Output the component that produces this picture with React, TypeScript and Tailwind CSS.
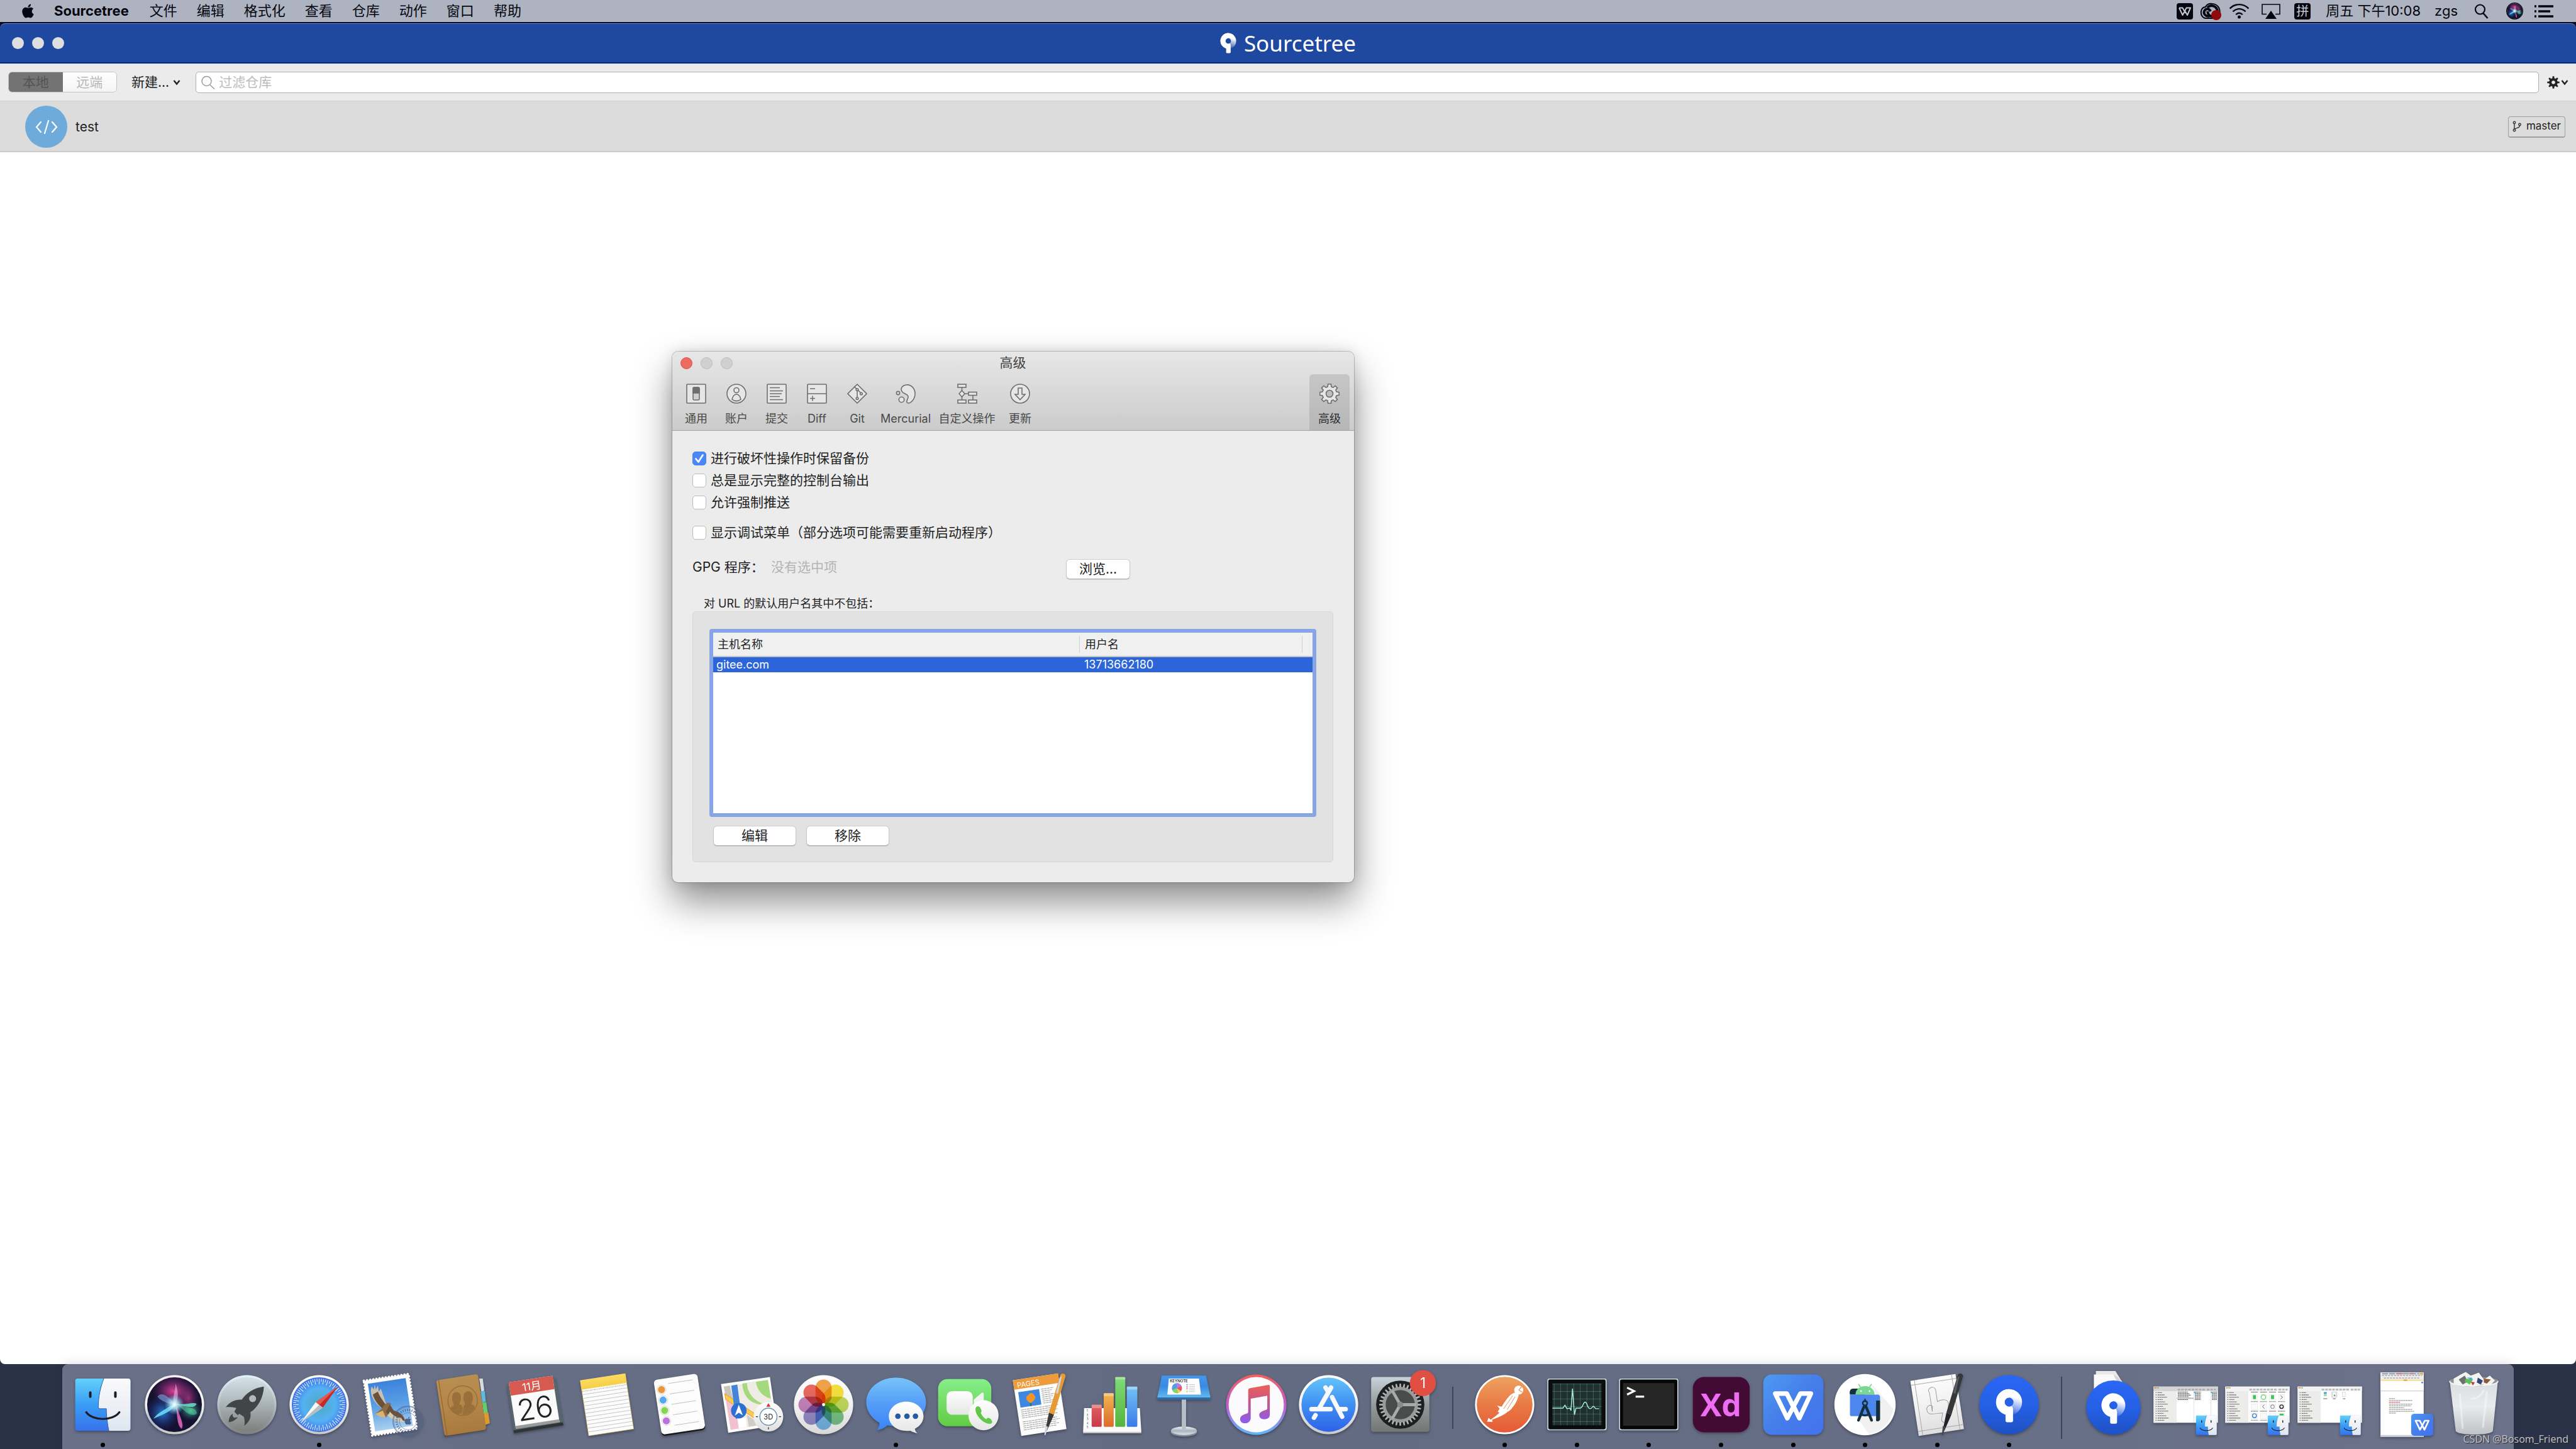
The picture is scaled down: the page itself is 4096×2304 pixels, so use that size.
import type { ReactNode } from 'react'
import { FaApple } from 'react-icons/fa'

const menus = ['文件', '编辑', '格式化', '查看', '仓库', '动作', '窗口', '帮助']

// Outline of a cog wheel, used by the toolbar, the preferences tab and the dock.
const gearPath = (cx: number, cy: number, outer: number, inner: number, teeth: number, w = 0.25) => {
  const pts: string[] = []
  for (let i = 0; i < teeth; i++) {
    const a = (i * 2 * Math.PI) / teeth - Math.PI / 2
    const step = (2 * Math.PI) / teeth
    const corners: [number, number][] = [
      [-w * 1.15, inner],
      [-w * 0.7, outer],
      [w * 0.7, outer],
      [w * 1.15, inner],
    ]
    corners.forEach(([k, r]) => {
      pts.push(`${(cx + r * Math.cos(a + k * step)).toFixed(2)} ${(cy + r * Math.sin(a + k * step)).toFixed(2)}`)
    })
  }
  return `M${pts.join('L')}Z`
}

const range = (n: number) => Array.from({ length: n }, (_, i) => i)

function Gradients() {
  const linear: [string, string[]][] = [
    ['finderBlue', ['#62d0fb', '#3a9df5', '#3872ec']],
    ['finderWhite', ['#fafafc', '#eef0f6', '#dde6f0']],
    ['ring', ['#ffffff', '#f1f1f1', '#c9c9c9']],
    ['launch', ['#d3e2e8', '#a9b3b6', '#7d7e7c']],
    ['launchRing', ['#e4f3fa', '#b7bfc3', '#7c7f82']],
    ['sky', ['#3c82dc', '#5b9fe6', '#a9d0ee']],
    ['leather', ['#b98e51', '#b48648', '#a97a3f']],
    ['yellow', ['#fbdb62', '#f5cf48']],
    ['photos', ['#ffffff', '#f2f2f2', '#d8d8d8']],
    ['message', ['#76c4f8', '#559df8', '#3b83f7']],
    ['green', ['#86ef8b', '#74dd66', '#62cb45']],
    ['paper', ['#ffffff', '#e4e6e4']],
    ['barRed', ['#e0605f', '#c93a49']],
    ['barOrange', ['#f2b74f', '#df6a2c']],
    ['barGreen', ['#7fdc78', '#55b43c']],
    ['barBlue', ['#74c3f7', '#3a7be8']],
    ['keynote', ['#4396ef', '#3a8ae2', '#63b9ee']],
    ['steel', ['#f2f5f8', '#a8b1bb', '#e1e5ea']],
    ['music', ['#ec5f56', '#c0568f', '#8a5cf5']],
    ['musicRing', ['#f0615b', '#c55bd0', '#5fb8fa']],
    ['store', ['#62c4f9', '#3f8ff2', '#2e61e8']],
    ['prefs', ['#c7d3da', '#959a9d', '#747674']],
    ['postman', ['#eea25f', '#e87a44', '#e75a37']],
    ['wps', ['#4d9bf3', '#457de9', '#4472ee']],
    ['sourcetree', ['#2b66f6', '#2560e6', '#1f51c4']],
    ['sheet', ['#fcfcfc', '#f1f1f1', '#dedede']],
    ['trash', ['#d9dce0', '#e9eaec', '#bfc2c6']],
  ]
  return (
    <svg className="absolute h-0 w-0" aria-hidden="true">
      <defs>
        {linear.map(([id, stops]) => (
          <linearGradient key={id} id={id} x1="0" y1="0" x2={id === 'wps' ? '1' : '0'} y2="1">
            {stops.map((c, i) => (
              <stop key={i} offset={i / (stops.length - 1)} stopColor={c} />
            ))}
          </linearGradient>
        ))}
        <linearGradient id="logoFade" gradientUnits="userSpaceOnUse" x1="92" y1="60" x2="82" y2="94">
          <stop offset="0" stopColor="#fff" />
          <stop offset="1" stopColor="#fff" stopOpacity="0.05" />
        </linearGradient>
        <radialGradient id="safari">
          <stop offset="0" stopColor="#4fa8c0" />
          <stop offset="0.6" stopColor="#55b2f2" />
          <stop offset="1" stopColor="#3a6fe8" />
        </radialGradient>
        <radialGradient id="siriPink">
          <stop offset="0" stopColor="#e3449a" stopOpacity="0.95" />
          <stop offset="1" stopColor="#8a2a80" stopOpacity="0" />
        </radialGradient>
        <radialGradient id="siriBlue">
          <stop offset="0" stopColor="#2b7fe0" stopOpacity="0.95" />
          <stop offset="1" stopColor="#1b2f80" stopOpacity="0" />
        </radialGradient>
        <radialGradient id="siriTeal">
          <stop offset="0" stopColor="#54d8b0" stopOpacity="0.8" />
          <stop offset="1" stopColor="#1c5c60" stopOpacity="0" />
        </radialGradient>
        <radialGradient id="siriCore">
          <stop offset="0" stopColor="#fff" />
          <stop offset="0.4" stopColor="#baf3ff" stopOpacity="0.8" />
          <stop offset="1" stopColor="#7fd0ff" stopOpacity="0" />
        </radialGradient>
        <pattern id="grid" width="13" height="15" patternUnits="userSpaceOnUse">
          <path d="M0 0H13M0 0V15" stroke="#5f8f84" strokeWidth="1.2" fill="none" />
        </pattern>
      </defs>
    </svg>
  )
}

/* ---------- shared drawings (144 x 144 canvas) ---------- */

function FinderArt() {
  return (
    <g>
      <rect x="17" y="20" width="110" height="104" rx="5" fill="url(#finderBlue)" />
      <path d="M74 20H122a5 5 0 0 1 5 5V119a5 5 0 0 1-5 5H84C81 110 79 92 79 80H66a3 3 0 0 1-3-3C63 55 68 35 74 20Z" fill="url(#finderWhite)" />
      <path d="M74 20C68 35 63 55 63 77a3 3 0 0 0 3 3H79C79 92 81 110 84 124" fill="none" stroke="#2b5c9a" strokeWidth="1.2" />
      <path d="M47 48V56M97 48V56" stroke="#1c1d24" strokeWidth="5" strokeLinecap="round" />
      <path d="M39 87C52 105 92 105 105 87" fill="none" stroke="#1c1d24" strokeWidth="4" strokeLinecap="round" />
    </g>
  )
}

function WpsArt() {
  return (
    <g>
      <rect x="12" y="12" width="120" height="120" rx="17" fill="url(#wps)" />
      <path d="M36 50H59L74 80M36 50L60 99L86 50H107L84 99L71 72" fill="none" stroke="#fff" strokeWidth="9" strokeLinejoin="round" strokeLinecap="round" />
    </g>
  )
}

function SourcetreeMark() {
  return (
    <g>
      <path fillRule="evenodd" d="M72 41A26 26 0 1 1 72 93A26 26 0 1 1 72 41ZM72 58A9 9 0 1 0 72 76A9 9 0 1 0 72 58Z" fill="url(#logoFade)" />
      <path d="M72 41A26 26 0 0 0 65 92V104a3 3 0 0 0 3 3H77a3 3 0 0 0 3-3V82C80 79 79 77 77 74.500A9 9 0 1 1 72 58Z" fill="#fff" />
    </g>
  )
}

function SiriArt() {
  return (
    <g>
      <circle cx="72" cy="72" r="59" fill="url(#ring)" />
      <circle cx="72" cy="72" r="54.5" fill="#15122f" />
      <ellipse cx="70" cy="45" rx="42" ry="32" fill="url(#siriPink)" />
      <ellipse cx="100" cy="60" rx="22" ry="32" fill="url(#siriPink)" opacity="0.6" />
      <ellipse cx="48" cy="88" rx="34" ry="36" fill="url(#siriBlue)" />
      <ellipse cx="104" cy="84" rx="24" ry="20" fill="url(#siriTeal)" />
      <path d="M72 70C58 52 44 46 38 56C44 64 58 70 72 72Z" fill="#7db7e8" opacity="0.55" />
      <path d="M72 70C60 78 40 86 30 100C48 92 66 86 74 72Z" fill="#6fe1f4" opacity="0.85" />
      <path d="M74 70C78 90 76 112 86 120C93 112 80 90 74 70Z" fill="#e668bd" opacity="0.85" />
      <path d="M74 70C92 74 108 66 116 70C112 82 92 74 74 72Z" fill="#6fe9cf" opacity="0.8" />
      <path d="M78 72C92 84 104 98 116 90C118 78 100 78 78 72Z" fill="#4fd79a" opacity="0.55" />
      <path d="M72 72C66 60 74 46 74 30C80 46 80 60 74 72Z" fill="#e9b8e6" opacity="0.6" />
      <circle cx="72" cy="72" r="20" fill="url(#siriCore)" />
    </g>
  )
}

function Tilted({ children }: { children: ReactNode }) {
  return <g transform="rotate(-8.7 72 72)">{children}</g>
}

function Pen({ dark }: { dark?: boolean }) {
  return (
    <g>
      <path d="M113 12C116 8 124 10 123 16L100 92L90 88Z" fill={dark ? '#35373b' : '#e79a33'} />
      <path d="M116 14L108 50L104 49L111 20Z" fill={dark ? '#5b6068' : '#cdd7e3'} />
      <path d="M100 92L90 88L83 122L86 124Z" fill={dark ? '#222327' : '#3c3a38'} />
      <path d="M88 116L83 133L81 132L83 114Z" fill={dark ? '#44474d' : '#c9d6e2'} />
    </g>
  )
}

function FinderWindow({ kind }: { kind: 'columns' | 'icons' | 'files' }) {
  return (
    <g>
      <rect x="8" y="36" width="128" height="72" fill="#fff" />
      <rect x="8" y="36" width="128" height="9" fill={kind === 'columns' ? '#d4d4d4' : '#f3f3f3'} />
      <rect x="8" y="45" width="46" height="63" fill="#ececeb" />
      <circle cx="11" cy="38.5" r="1.2" fill="#d9534a" />
      <circle cx="14" cy="38.5" r="1.2" fill="#c9a23c" />
      <circle cx="17" cy="38.5" r="1.2" fill="#4ca84a" />
      <path d="M56 42H110M114 42H132" stroke="#9a9a9a" strokeWidth="3" strokeDasharray="5 2" opacity="0.7" />
      {range(13).map((i) => (
        <path key={i} d={`M12 ${48 + i * 4.6}h2M16 ${48 + i * 4.6}h${9 + ((i * 5) % 14)}`} stroke="#777" strokeWidth="1.6" strokeDasharray="3 0.6" />
      ))}
      {kind === 'columns' &&
        range(6).map((i) => (
          <path key={i} d={`M56 ${47 + i * 3}h${20 + ((i * 3) % 7)}M90 ${47 + i * 3}h12M124 ${47 + i * 3}h10`} stroke="#555" strokeWidth="1.4" strokeDasharray="3 0.5" />
        ))}
      {kind === 'columns' && (
        <>
          <rect x="54" y="58" width="34" height="2.6" fill="#bdbdbd" />
          <path d="M88 45V108M122 45V108" stroke="#d8d8d8" />
          <rect x="88" y="46" width="3" height="3" fill="#45b2ef" />
          <rect x="122" y="46" width="3" height="3" fill="#45b2ef" />
        </>
      )}
      {kind === 'icons' && (
        <>
          {[66, 84, 102, 120].map((x, i) =>
            [57, 76, 94].map((y, j) => (
              <g key={`${i}${j}`}>
                <rect x={x - 6} y={y - 5} width="12" height="11" fill="#fafafa" stroke="#ddd" strokeWidth="0.6" />
                <path d={`M${x - 7} ${y + 9}h14`} stroke="#777" strokeWidth="1.3" strokeDasharray="2.5 0.5" />
              </g>
            ))
          )}
          <path d="M59 47h14M77 47h14M95 47h14M113 47h14" stroke="#777" strokeWidth="1.3" />
          <rect x="63" y="53" width="6" height="8" fill="#3fc35b" />
          <circle cx="84" cy="57" r="4.5" fill="none" stroke="#5ddc5a" strokeWidth="1.5" />
          <rect x="99" y="53" width="6" height="8" fill="#3fc35b" />
          <path d="M118 54l4 3l-4 4M86 72l-4 4l4 4" fill="none" stroke="#444" />
          <circle cx="102" cy="76" r="3.5" fill="none" stroke="#999" strokeWidth="1.5" />
          <circle cx="120" cy="76" r="3.5" fill="none" stroke="#222" strokeWidth="1.8" />
          <circle cx="66" cy="94" r="4" fill="none" stroke="#3b8bdc" strokeWidth="1.8" />
          <rect x="116" y="90" width="8" height="4" fill="#35c650" />
        </>
      )}
      {kind === 'files' && (
        <>
          <rect x="60" y="47" width="6" height="3" fill="#3f9be0" />
          <rect x="60" y="50" width="6" height="5" fill="#a9d7b4" />
          <rect x="75" y="46" width="12" height="12" fill="#dcdcdc" />
          <rect x="78" y="48" width="6" height="8" fill="#fff" />
          <rect x="80" y="52" width="3" height="3" fill="#45b86a" />
          <rect x="97" y="47" width="6" height="9" fill="#f8f8f8" stroke="#ccc" strokeWidth="0.7" />
          <path d="M59 60h8M78 60h6M98 60h5" stroke="#666" strokeWidth="1.3" />
        </>
      )}
      <g transform="translate(86 86) scale(0.375)">
        <FinderArt />
      </g>
    </g>
  )
}

/* ---------- dock ---------- */

type DockApp = { name: string; running?: boolean; art: ReactNode }

const apps: DockApp[] = [
  { name: 'Finder', running: true, art: <FinderArt /> },
  { name: 'Siri', art: <SiriArt /> },
  {
    name: 'Launchpad',
    art: (
      <g>
        <circle cx="72" cy="72" r="59" fill="url(#launchRing)" />
        <circle cx="72" cy="72" r="54.5" fill="url(#launch)" />
        <path d="M106 36C88 38 71 48 62 62C50 61 38 66 30 77C38 76 46 77 51 79L47 86L54 93L57 90L66 96C68 102 68 108 67 114C77 106 81 98 79 87C94 78 105 58 106 36Z" fill="#414548" />
        <circle cx="83.500" cy="60" r="7" fill="#aebabf" />
        <path d="M44 90C37 94 36 101 36 107C44 106 50 102 54 97L48 98C44 97 43 94 44 90Z" fill="#414548" />
      </g>
    ),
  },
  {
    name: 'Safari',
    running: true,
    art: (
      <g>
        <circle cx="72" cy="72" r="59" fill="url(#ring)" />
        <circle cx="72" cy="72" r="54.5" fill="url(#safari)" />
        {range(72).map((i) => (
          <path key={i} d={i % 2 ? 'M72 20V26' : 'M72 20V31'} stroke="#eef6ff" strokeWidth="1.5" opacity="0.85" transform={`rotate(${i * 5} 72 72)`} />
        ))}
        <path d="M110 35L79 78L65 67Z" fill="#e4564f" />
        <path d="M110 35L79 78L72 72.500Z" fill="#bf2a2a" />
        <path d="M35 108L65 67L79 78Z" fill="#f6f6f6" />
        <path d="M35 108L72 72.500L79 78Z" fill="#b9bdc2" />
      </g>
    ),
  },
  {
    name: 'Mail',
    art: (
      <g>
        <Tilted>
          <rect x="26" y="17" width="90" height="110" fill="#fff" />
          <rect x="26" y="17" width="90" height="110" fill="none" stroke="#fff" strokeWidth="5" strokeDasharray="0.1 6.2" strokeLinecap="round" />
          <rect x="33" y="24" width="76" height="96" fill="url(#sky)" />
        </Tilted>
        <path d="M34 36C30 44 33 56 40 66C46 74 52 78 58 82L66 78C60 64 56 50 52 40L48 46L46 34L42 42L40 32L38 42Z" fill="#c9bfae" />
        <path d="M36 52C40 66 50 76 58 82L66 76C58 68 50 56 46 46Z" fill="#6b5139" />
        <path d="M41 90L54 80C60 68 68 66 72 70C72 76 70 86 62 98L52 94Z" fill="#8d6b45" />
        <path d="M41 90L56 84L62 98L50 96Z" fill="#d9b376" />
        <path d="M62 86C72 98 84 104 100 104C98 92 88 86 78 84L70 72Z" fill="#6b5139" />
        <path d="M66 94C74 102 86 108 98 106L92 98C82 98 76 92 70 86Z" fill="#d7c9b0" />
        <g fill="none" stroke="#4f628c" opacity="0.75">
          <circle cx="106" cy="105" r="30" strokeWidth="1.5" />
          <circle cx="106" cy="105" r="28" strokeWidth="0.8" />
          <circle cx="106" cy="105" r="17" strokeWidth="1" />
          <circle cx="106" cy="105" r="22.500" strokeWidth="5" strokeDasharray="2 2.500" />
        </g>
        <FaApple x="97" y="95" size="18" color="#4f628c" />
      </g>
    ),
  },
  {
    name: 'Contacts',
    art: (
      <g>
        <path d="M104 20L111 20L114 44L108 46Z" fill="#d9dbdd" />
        <path d="M107 45L115 45L117 66L110 68Z" fill="#5fb9e0" />
        <path d="M110 68L118 67L121 88L113 90Z" fill="#63cf6a" />
        <path d="M113 89L122 88L125 109L116 112Z" fill="#e09a2c" />
        <path d="M35 135L117 122L118 116L34 128Z" fill="#5c3f1e" />
        <Tilted>
          <rect x="26" y="16" width="84" height="112" rx="5" fill="url(#leather)" />
          <path d="M31 16V128" stroke="#8f6733" strokeWidth="1.500" />
        </Tilted>
        <circle cx="71" cy="64" r="29.500" fill="none" stroke="#99703a" strokeWidth="1.800" />
        <path d="M50 84C44 80 46 78 54 73C48 62 48 46 60 47C68 48 70 60 64 71C72 74 72 80 70 88C62 94 54 90 50 84Z" fill="#99703a" />
        <path d="M92 82C98 78 96 74 88 71C94 60 92 46 82 45C72 46 70 60 76 71C70 76 74 80 70 92C80 92 88 88 92 82Z" fill="#99703a" />
      </g>
    ),
  },
  {
    name: 'Calendar',
    art: (
      <g>
        <path d="M15 33L112 19L128 113L29 129Z" fill="#58656d" />
        <path d="M29 129L128 113L126 107L28 123Z" fill="#2f3436" />
        <Tilted>
          <rect x="26" y="20" width="88" height="93" fill="#fbfbfb" />
          <rect x="26" y="20" width="88" height="27" fill="#d75a50" />
          <path d="M26 108H114V114H26Z" fill="#9a9a9a" />
          <text x="70" y="42" fontSize="21" textAnchor="middle" fill="#fff">11月</text>
          <text x="70" y="100" fontSize="59" fontWeight="300" textAnchor="middle" fill="#222">26</text>
        </Tilted>
      </g>
    ),
  },
  {
    name: 'Notes',
    art: (
      <Tilted>
        <rect x="26" y="17" width="91" height="111" fill="#fcfcfb" stroke="#a98f3a" strokeWidth="0.800" />
        <rect x="26" y="16" width="91" height="19" fill="url(#yellow)" />
        <path d="M27 38.500H117" stroke="#777" strokeWidth="1.200" strokeDasharray="1.200 1.800" />
        {range(11).map((i) => (
          <path key={i} d={`M27 ${45 + i * 7.5}H117`} stroke="#b9bac4" strokeWidth="1" />
        ))}
      </Tilted>
    ),
  },
  {
    name: 'Reminders',
    art: (
      <Tilted>
        <rect x="28" y="19" width="88" height="110" rx="7" fill="#17181a" />
        <rect x="28" y="16" width="88" height="110" rx="7" fill="#fcfcfc" />
        {['#ef9436', '#4fa9f3', '#84d64f', '#b971dc'].map((c, i) => (
          <g key={c}>
            <circle cx="41" cy={37 + i * 21} r="9" fill="none" stroke="#cfcfcf" />
            <circle cx="41" cy={37 + i * 21} r="7" fill={c} />
          </g>
        ))}
        {range(5).map((i) => (
          <path key={i} d={`M56 ${27 + i * 21}H105`} stroke="#b5b5b5" strokeWidth="1" />
        ))}
      </Tilted>
    ),
  },
  {
    name: 'Maps',
    art: (
      <g>
        <path d="M10.500 31L108 17L122 113L25 128Z" fill="#fdfdfb" />
        <path d="M16 36L104 23L117 108L30 122Z" fill="#efece4" />
        <path d="M53 30L104 23L111 66L92 72C66 70 54 52 53 30Z" fill="#a5d97e" />
        <path d="M62 29L80 26C82 44 94 56 110 60L111 74C82 70 64 54 62 29Z" fill="#efece4" />
        <path d="M16 36L28 34L34 60L19 50Z" fill="#c9c5bc" />
        <path d="M18 50L78 90L106 108L92 110L70 94L20 62Z" fill="#f6cf52" stroke="#ef9d3c" strokeWidth="1.500" />
        <path d="M20 62L42 78L48 119L30 122Z" fill="#f2c1cf" />
        <path d="M31 34L43 32L52 100L40 100Z" fill="#4386d8" />
        <path d="M43 98H60L62 116L46 119Z" fill="#fff" />
        <path d="M62 92L90 112L66 116Z" fill="#cfccc4" />
        <circle cx="46" cy="84" r="15.500" fill="#2e6fd3" />
        <path d="M46 72L54 93L46 88L38 94Z" fill="#fff" />
        <circle cx="105" cy="96" r="29.500" fill="url(#sheet)" />
        <circle cx="105" cy="96" r="17" fill="#fff" stroke="#6a94ad" strokeWidth="1.800" />
        <path d="M105 69L109 76H101Z" fill="#dd2f25" />
        <path d="M80 96h4M126 96h4M105 117v4" stroke="#222" strokeWidth="1.500" />
        <text x="105" y="101" fontSize="14" textAnchor="middle" fill="#222">3D</text>
      </g>
    ),
  },
  {
    name: 'Photos',
    art: (
      <g>
        <circle cx="72" cy="72" r="59" fill="url(#photos)" />
        {['#f29a36', '#f8e02a', '#bcd94a', '#6cc080', '#6db3e8', '#8e82c8', '#c077b4', '#ea5a50'].map((c, i) => (
          <rect key={c} x="56" y="22" width="32" height="49" rx="16" fill={c} opacity="0.9" className="mix-blend-multiply" transform={`rotate(${i * 45} 72 72)`} />
        ))}
        <circle cx="72" cy="72" r="3" fill="#fff" />
      </g>
    ),
  },
  {
    name: 'Messages',
    running: true,
    art: (
      <g>
        <path d="M72 18C105 18 132 40 132 67C132 95 105 115 72 115C66 115 60 114 55 113C48 119 42 122 34 123C38 118 40 112 39 108C23 99 13 84 13 67C13 40 39 18 72 18Z" fill="url(#message)" />
        <path d="M93 66C112 66 127 79 127 95C127 106 120 115 110 120C110 123 112 127 115 129C109 128 104 126 101 124C76 127 58 113 58 95C58 79 73 66 93 66Z" fill="url(#paper)" />
        <g fill="#2b599f">
          <circle cx="76" cy="95" r="5.500" />
          <circle cx="94" cy="95" r="5.500" />
          <circle cx="111" cy="95" r="5.500" />
        </g>
      </g>
    ),
  },
  {
    name: 'FaceTime',
    art: (
      <g>
        <rect x="12" y="21" width="106" height="94" rx="19" fill="url(#green)" />
        <rect x="29" y="45" width="52" height="47" rx="11" fill="url(#paper)" />
        <path d="M83 62L98 49C101 47 103 48 103 51V85C103 88 101 90 98 87L83 75Z" fill="#f2f4f2" />
        <circle cx="102.500" cy="93" r="30" fill="url(#paper)" />
        <path d="M87 78C83 90 102 112 117 110C121 108 120 104 117 101C113 97 110 98 108 101C104 100 98 92 97 88C99 86 99 84 97 80C94 74 90 74 87 78Z" fill="#62c84c" />
      </g>
    ),
  },
  {
    name: 'Pages',
    art: (
      <g>
        <Tilted>
          <rect x="26" y="16" width="91" height="112" fill="#fdfdfd" />
          <rect x="26" y="16" width="91" height="19" fill="#ee9b3c" />
          <text x="33" y="32" fontSize="14" fill="#fff">PAGES</text>
          <rect x="33" y="41" width="42" height="31" fill="#3c87df" />
          <path d="M54 66C44 60 46 50 52 50C56 44 62 46 64 52C68 56 62 64 54 66Z" fill="#f0952c" />
          <path d="M54 66V72" stroke="#2f6a34" strokeWidth="2" />
          {range(8).map((i) => (
            <path key={i} d={`M79 ${42 + i * 4}H${104 - (i % 3) * 4}`} stroke="#9a9a9a" strokeWidth="1.300" strokeDasharray="5 1" />
          ))}
          {range(11).map((i) => (i === 5 ? null : <path key={i} d={`M33 ${77 + i * 4}H${108 - ((i * 7) % 12)}`} stroke="#9a9a9a" strokeWidth="1.300" strokeDasharray="6 1 4 1" />))}
        </Tilted>
        <Pen />
      </g>
    ),
  },
  {
    name: 'Numbers',
    art: (
      <g>
        <path d="M16 79H127L130 127H14Z" fill="#fafafa" />
        <path d="M14 126H130V129H14Z" fill="#c3c3c3" />
        {range(5).map((i) => (
          <text key={i} x="21" y={87 + i * 8} fontSize="6" fill="#555">{i + 1}</text>
        ))}
        <rect x="31" y="72" width="20" height="44" rx="2" fill="url(#barRed)" />
        <rect x="55" y="49" width="20" height="67" rx="2" fill="url(#barOrange)" />
        <rect x="78" y="17" width="20" height="99" rx="2" fill="url(#barGreen)" />
        <rect x="101" y="36" width="21" height="80" rx="2" fill="url(#barBlue)" />
        <g fill="#fff" opacity="0.3">
          <rect x="31" y="72" width="20" height="7" />
          <rect x="55" y="49" width="20" height="6" />
          <rect x="78" y="17" width="20" height="5" />
          <rect x="101" y="36" width="21" height="6" />
        </g>
      </g>
    ),
  },
  {
    name: 'Keynote',
    art: (
      <g>
        <rect x="68" y="60" width="8" height="62" fill="url(#steel)" />
        <ellipse cx="72" cy="127" rx="26" ry="8.500" fill="#7e8d9b" />
        <ellipse cx="72" cy="124" rx="26" ry="8.500" fill="url(#steel)" />
        <path d="M68 60H76V124H68Z" fill="#b6bec7" />
        <path d="M28 14H116L125 58H19Z" fill="url(#keynote)" />
        <path d="M19 58H125V62H19Z" fill="#2c6ca8" />
        <path d="M42 20H102L106 52H39Z" fill="#fdfdfd" />
        <text x="44" y="27" fontSize="7.500" fontWeight="600" fill="#333">KEYNOTE</text>
        <circle cx="58" cy="39" r="10" fill="#4f9fe6" />
        <path d="M58 39V29A10 10 0 0 1 67 35Z" fill="#c277e0" />
        <path d="M58 39L67 35A10 10 0 0 1 66 45Z" fill="#e55" />
        <path d="M58 39L66 45A10 10 0 0 1 60 49Z" fill="#f3d04b" />
        <path d="M58 39L60 49A10 10 0 0 1 49 43Z" fill="#8bd560" />
        {['#4f9fe6', '#c277e0', '#e55', '#f3d04b', '#8bd560'].map((c, i) => (
          <g key={c}>
            <rect x="77" y={31 + i * 3.5} width="2.500" height="2" fill={c} />
            <path d={`M82 ${32 + i * 3.5}h12`} stroke="#bbb" strokeWidth="1" />
          </g>
        ))}
      </g>
    ),
  },
  {
    name: 'iTunes',
    art: (
      <g>
        <circle cx="72" cy="72" r="60" fill="url(#musicRing)" />
        <circle cx="72" cy="72" r="55" fill="#fbfafc" />
        <path d="M56 44C56 41 57 40 60 39L95 33C98 32 99 33 99 36V92C99 98 94 101 88 101C82 101 78 98 78 93C78 88 82 86 87 84C93 82 94 82 94 78V54L61 60V98C61 105 56 109 50 109C44 109 40 106 40 101C40 95 44 93 49 91C55 89 56 89 56 85Z" fill="url(#music)" />
      </g>
    ),
  },
  {
    name: 'App Store',
    art: (
      <g>
        <circle cx="72" cy="72" r="59" fill="url(#ring)" />
        <circle cx="72" cy="72" r="54" fill="url(#store)" />
        <g stroke="#f7f9fb" strokeWidth="9" strokeLinecap="round" fill="none">
          <path d="M77 38L53 80M38 81H76M94 81H106M66 38L71 46M79 57L99 96M46 93L43 98" />
        </g>
      </g>
    ),
  },
  {
    name: 'System Preferences',
    art: (
      <g>
        <rect x="14" y="17" width="116" height="109" rx="5" fill="url(#prefs)" />
        <circle cx="72" cy="72" r="48" fill="#1e1f20" />
        <path d={gearPath(72, 72, 42, 35, 32)} fill="#b1b2b2" />
        <circle cx="72" cy="72" r="30" fill="#4a4b4b" />
        <circle cx="72" cy="72" r="32" fill="none" stroke="#9a9b9b" strokeWidth="6" />
        <path d="M72 72H104M72 72L56 44M72 72L56 100" stroke="#a9aaaa" strokeWidth="6" />
        <circle cx="72" cy="72" r="6" fill="#8b8c8c" />
        <circle cx="117" cy="29" r="26" fill="#e04f42" />
        <text x="117" y="39" fontSize="28" textAnchor="middle" fill="#fff">1</text>
      </g>
    ),
  },
]

const openApps: DockApp[] = [
  {
    name: 'Postman',
    running: true,
    art: (
      <g>
        <circle cx="72" cy="72" r="59" fill="#fff" />
        <circle cx="72" cy="72" r="55.500" fill="url(#postman)" />
        <circle cx="100" cy="43" r="9" fill="#fff" />
        <path d="M100 43L106 36M100 43L107 47" stroke="#e98c4f" strokeWidth="1.500" />
        <path d="M93 48C82 50 74 64 66 76L57 74L62 80L58 86C68 92 80 86 84 82C92 74 98 62 100 53Z" fill="#fff" />
        <path d="M88 54L70 80M93 56L77 82" stroke="#e98c4f" strokeWidth="1.200" />
        <path d="M66 84C58 92 50 98 44 102L37 104L48 106L47 102C58 98 72 92 78 86Z" fill="#fff" />
        <path d="M40 98L37 106L48 106Z" fill="#fff" />
      </g>
    ),
  },
  {
    name: 'Activity Monitor',
    running: true,
    art: (
      <g>
        <rect x="13" y="20" width="118" height="103" rx="4" fill="#c9dce4" />
        <rect x="15" y="22" width="114" height="99" rx="3" fill="#0b0c0c" />
        <rect x="23" y="30" width="98" height="83" fill="#1f302e" />
        <rect x="23" y="30" width="98" height="83" fill="url(#grid)" />
        <path d="M23 79H44L48 73L52 80L58 79L60 84L63 40L67 92L70 79H78C84 79 84 67 88 67C93 67 92 79 98 80C103 80 103 73 106 76L109 80H116" fill="none" stroke="#a9f0dc" strokeWidth="1.800" />
      </g>
    ),
  },
  {
    name: 'Terminal',
    running: true,
    art: (
      <g>
        <rect x="13" y="20" width="118" height="103" rx="4" fill="#c9dce4" />
        <rect x="15" y="22" width="114" height="99" rx="3" fill="#060606" />
        <rect x="21" y="29" width="102" height="85" fill="#262626" />
        <path d="M29 38L43 45L29 52" fill="none" stroke="#fff" strokeWidth="4" />
        <path d="M46 56H63" stroke="#fff" strokeWidth="4" />
      </g>
    ),
  },
  {
    name: 'Adobe XD',
    running: true,
    art: (
      <g>
        <rect x="16" y="17" width="113" height="110" rx="22" fill="#420a35" />
        <text x="72" y="95" fontSize="63" fontWeight="700" textAnchor="middle" fill="#ec6df2" className="font-['Open_Sans',sans-serif]">Xd</text>
      </g>
    ),
  },
  { name: 'WPS Office', running: true, art: <WpsArt /> },
  {
    name: 'Android Studio',
    running: true,
    art: (
      <g>
        <circle cx="72" cy="72" r="61" fill="#fff" />
        <path d="M84 30L128 80A60 60 0 0 1 80 131L58 100L98 60Z" fill="#f1f1f1" />
        <path d="M48 40H72V52H42C40 44 44 40 48 40Z" fill="#14303f" />
        <path d="M53 52C53 42 61 35 72 35C83 35 91 42 91 52Z" fill="#78d793" />
        <path d="M63 37L59 31M81 37L85 31" stroke="#78d793" strokeWidth="2" />
        <circle cx="64" cy="45" r="1.800" fill="#fff" />
        <circle cx="81" cy="45" r="1.800" fill="#fff" />
        <path d="M42 52H97C101 52 102 55 102 58V64H94V95H45C43 95 42 93 42 91Z" fill="#4c86ee" />
        <path d="M94 64H102V101C102 105 94 107 94 103Z" fill="#14303f" />
        <path d="M72 60V67" stroke="#14303f" strokeWidth="2.500" />
        <circle cx="72" cy="69" r="4.500" fill="none" stroke="#14303f" strokeWidth="3" />
        <path d="M70 76L59 103M74 76L85 103" stroke="#14303f" strokeWidth="5.500" strokeLinecap="round" />
        <path d="M64 91C69 94 75 94 80 91" fill="none" stroke="#14303f" strokeWidth="4" />
      </g>
    ),
  },
  {
    name: 'Script Editor',
    running: true,
    art: (
      <g>
        <Tilted>
          <rect x="26" y="17" width="91" height="111" fill="url(#sheet)" />
          <path d="M34 17V128M109 17V128M26 26H117M26 119H117" stroke="#9b9b9b" strokeWidth="1" />
          <path d="M60 46C54 36 72 32 73 42V66C82 62 96 64 94 74L88 104C86 112 74 110 76 102L80 90C66 88 52 92 50 82C48 72 58 68 62 74L60 84Z" fill="none" stroke="#9b9b9b" strokeWidth="1.200" />
        </Tilted>
        <Pen dark />
      </g>
    ),
  },
  {
    name: 'Sourcetree',
    running: true,
    art: (
      <g>
        <circle cx="72" cy="72" r="59" fill="url(#sourcetree)" />
        <SourcetreeMark />
      </g>
    ),
  },
]

const minimized: DockApp[] = [
  {
    name: 'Sourcetree 文稿',
    art: (
      <g>
        <path d="M37 5H76L104 50V80H37Z" fill="#e9e9e9" />
        <path d="M33 12H72L98 44V80H33Z" fill="#fafafa" />
        <path d="M72 12C84 18 92 30 98 44L82 32Z" fill="#d4d4d4" />
        <g transform="translate(6 12) scale(0.915)">
          <circle cx="72" cy="72" r="59" fill="url(#sourcetree)" />
          <SourcetreeMark />
        </g>
      </g>
    ),
  },
  { name: '访达窗口 1', art: <FinderWindow kind="columns" /> },
  { name: '访达窗口 2', art: <FinderWindow kind="icons" /> },
  { name: '访达窗口 3', art: <FinderWindow kind="files" /> },
  {
    name: 'WPS 文档',
    art: (
      <g>
        <rect x="29" y="8" width="86" height="128" fill="#fff" />
        <rect x="29" y="8" width="86" height="36" fill="#ededed" />
        <path d="M32 10.500H106" stroke="#8492b0" strokeWidth="2" strokeDasharray="12 2" />
        <path d="M60 10.500H74M86 10.500h8" stroke="#d9605a" strokeWidth="1.500" />
        <path d="M107 10.500H114" stroke="#e9a33a" strokeWidth="3" />
        <path d="M32 14H112M36 19H108" stroke="#9a9a9a" strokeWidth="1.600" strokeDasharray="4 2" />
        <rect x="29" y="22" width="86" height="3" fill="#f4e3a0" />
        <rect x="75" y="22" width="7" height="2.500" fill="#e2a12d" />
        <rect x="29" y="25" width="86" height="19" fill="#fff" />
        <path d="M29 44.500H115" stroke="#d3d3d3" strokeWidth="1.500" />
        <circle cx="112" cy="28" r="1.800" fill="#3b7fe8" />
        {range(9).map((i) => (
          <path key={i} d={`M46 ${60 + i * 3.6}h${[12, 46, 22, 46, 44, 30, 46, 50, 14][i]}`} stroke={i === 2 ? '#e05a5a' : '#9d9d9d'} strokeWidth="1.500" strokeDasharray="4 0.700" />
        ))}
        <path d="M29 134H115" stroke="#c9ced8" strokeWidth="3" />
        <g transform="translate(85.600 85.600) scale(0.367)">
          <WpsArt />
        </g>
      </g>
    ),
  },
  {
    name: '废纸篓',
    art: (
      <g>
        <path d="M24 24C26 18 118 18 120 24L110 124C108 134 38 134 36 124Z" fill="url(#trash)" />
        <path d="M24 24C32 14 112 14 120 24C124 40 20 40 24 24Z" fill="#8e9296" />
        <path d="M32 20L46 12L56 7L66 14L82 8L92 22L104 14L114 24L104 34L88 32L70 36L46 34L32 30Z" fill="#f2f2f0" />
        <path d="M42 22L54 14L60 26L50 32Z" fill="#6d6f70" />
        <path d="M56 20L70 22L64 32L54 26Z" fill="#63bf57" />
        <path d="M58 18L68 18L70 24Z" fill="#45a9df" />
        <path d="M80 18L90 24L86 32L78 28Z" fill="#31487c" />
        <path d="M92 20L106 22L98 30L92 28Z" fill="#8a5a36" />
        <path d="M66 26L74 28L70 34Z" fill="#b7432c" />
        <path d="M24 25C22 38 122 38 120 25" fill="none" stroke="#f4f5f6" strokeWidth="2.500" />
        <path d="M44 50L50 120M98 46L90 118M66 60C76 62 90 52 92 42" stroke="#fff" strokeWidth="4" opacity="0.4" fill="none" />
      </g>
    ),
  },
]

function DockItem({ app }: { app: DockApp }) {
  return (
    <li className="flex min-w-0 flex-1 flex-col items-center gap-[3px]">
      <button type="button" aria-label={app.name} className="block">
        <svg viewBox="0 0 144 144" className="h-[115px] w-[115px] drop-shadow-[0_2px_2px_rgba(0,0,0,0.35)]" aria-hidden="true">
          {app.art}
        </svg>
      </button>
      <span className={app.running ? 'size-[7px] rounded-full bg-black' : 'size-[7px]'} />
    </li>
  )
}

function DockSeparator({ tall }: { tall?: boolean }) {
  return (
    <li aria-hidden="true" className="flex w-[51px] shrink-0 items-center justify-center">
      <span className={tall ? 'h-[99px] w-[2px] bg-[#3b445f]' : 'h-[67px] w-[2px] bg-[#3b445f]'} />
    </li>
  )
}

function Dock() {
  return (
    <footer className="relative bg-[#2a3247] px-[99px]">
      <ul className="flex rounded-t-[9px] bg-linear-to-r from-[#697088] via-[#626b82] to-[#6b728a] pt-[7px] pr-[6px] pb-[3px] pl-[7px] shadow-[0_-2px_16px_rgba(0,0,0,0.12)]">
        {apps.map((app) => (
          <DockItem key={app.name} app={app} />
        ))}
        <DockSeparator />
        {openApps.map((app) => (
          <DockItem key={app.name} app={app} />
        ))}
        <DockSeparator tall />
        {minimized.map((app) => (
          <DockItem key={app.name} app={app} />
        ))}
      </ul>
      <p className="absolute right-3 bottom-1 font-['Open_Sans',sans-serif] text-[16px] leading-6 text-[#c3c6cf] [text-shadow:1px_1px_1px_#222]">
        CSDN @Bosom_Friend
      </p>
    </footer>
  )
}

/* ---------- menu bar ---------- */

function MenuBar() {
  return (
    <header className="flex h-[35px] items-center justify-between bg-[#adb3c0] pr-[36px] pl-[32px] text-[22px] leading-[35px] text-[#05060f]">
      <nav className="flex items-center">
        <button type="button" aria-label="Apple" className="mr-[29px]">
          <FaApple size={25} />
        </button>
        <button type="button" className="mr-[33px] font-bold">Sourcetree</button>
        <div className="flex gap-[31px]">
          {menus.map((m) => (
            <button type="button" key={m}>{m}</button>
          ))}
        </div>
      </nav>

      <div className="flex items-center">
        <svg viewBox="0 0 26 26" className="mr-[11px] size-[26px]" aria-hidden="true">
          <rect width="26" height="26" rx="4" fill="#05060f" />
          <path d="M4 7.500H9.500L14 16M4 7.500L9.500 19L15.500 7.500H22L17 19L13 12" fill="none" stroke="#c4c8d2" strokeWidth="2" strokeLinejoin="round" />
        </svg>
        <svg viewBox="0 0 34 28" className="mr-[12px] h-[28px] w-[34px]" aria-hidden="true">
          <path d="M6 24C0 20 0 8 9 7C12 0 25 0 30 8C34 16 30 25 22 25H10C8 25 7 25 6 24Z" fill="none" stroke="#05060f" strokeWidth="2" />
          <path d="M17 21C9 24 4 17 8 12C11 9 15 10 17 14M12 8C18 2 27 6 28 14M12 14C13 20 17 22 20 22" fill="none" stroke="#05060f" strokeWidth="4" />
          <circle cx="26" cy="20" r="8" fill="#8f0b0b" />
        </svg>
        <svg viewBox="0 0 34 26" className="mr-[19px] h-[25px] w-[33px]" fill="none" stroke="#05060f" strokeWidth="2.500" aria-hidden="true">
          <path d="M1.500 9C10 0 24 0 32.500 9M6.500 14C13 8 21 8 27.500 14M11.500 19C15 15.500 19 15.500 22.500 19" />
          <circle cx="17" cy="23" r="2.600" fill="#05060f" stroke="none" />
        </svg>
        <svg viewBox="0 0 30 24" className="mr-[22px] h-[24px] w-[30px]" aria-hidden="true">
          <path d="M8 16.500H1V1H29V16.500H22" fill="none" stroke="#05060f" strokeWidth="1.600" />
          <path d="M15 11L24 24H6Z" fill="#05060f" />
        </svg>
        <span className="mr-[24px] flex size-[26px] items-center justify-center rounded-[4px] bg-[#05060f] text-[20px] leading-none text-[#c4c8d2]">拼</span>
        <span className="mr-[22px]">周五 下午10:08</span>
        <span className="mr-[26px]">zgs</span>
        <svg viewBox="0 0 22 28" className="mr-[28px] h-[28px] w-[23px]" fill="none" stroke="#05060f" strokeWidth="2.200" aria-hidden="true">
          <circle cx="9" cy="11" r="7.500" />
          <path d="M14 17L21 25" strokeWidth="2.600" />
        </svg>
        <svg viewBox="12 12 120 120" className="mr-[18px] size-[27px]" aria-hidden="true">
          <SiriArt />
          <circle cx="72" cy="72" r="57" fill="none" stroke="#05060f" strokeWidth="6" />
        </svg>
        <svg viewBox="0 0 30 20" className="h-[20px] w-[30px]" stroke="#05060f" strokeWidth="3.500" aria-hidden="true">
          <path d="M0 2H3M6 2H30M0 10H3M6 10H25M0 18H3M6 18H30" />
        </svg>
      </div>
    </header>
  )
}

/* ---------- Sourcetree window ---------- */

function Chevron() {
  return (
    <svg viewBox="0 0 12 10" className="h-[10px] w-[12px]" aria-hidden="true">
      <path d="M1.500 2L6 7.500L10.500 2" fill="none" stroke="#222" strokeWidth="2.400" />
    </svg>
  )
}

function TitleBar() {
  return (
    <div className="grid h-16 grid-cols-3 items-center rounded-t-[8px] border-t border-b-2 border-t-[#6d87c0] border-b-[#01297c] bg-[#1f49a0] px-[19px]">
      <div className="flex gap-[13px]">
        {range(3).map((i) => (
          <span key={i} className="size-[19px] rounded-full bg-[#dedede]" />
        ))}
      </div>
      <h1 className="flex items-center justify-center gap-[12px] font-['Noto_Sans',sans-serif] text-[35px] leading-none text-white">
        <svg viewBox="45 40 54 68" className="h-[33px] w-[26px]" aria-hidden="true">
          <SourcetreeMark />
        </svg>
        Sourcetree
      </h1>
    </div>
  )
}

function Toolbar() {
  return (
    <div className="flex h-[59px] items-center bg-[#ebebeb] pr-[12px] pl-[13px] text-[21px] leading-[31px]">
      <div className="mr-[23px] flex h-[33px] w-[173px] overflow-hidden rounded-[6px] border border-[#c4c4c4]">
        <button type="button" className="flex-1 bg-[#737373] text-[#545454]">本地</button>
        <button type="button" className="flex-1 bg-linear-to-b from-white to-[#f4f4f4] text-[#b8b8b8]">远端</button>
      </div>
      <button type="button" className="mr-[24px] flex items-center gap-[6px] text-[#222]">
        新建...
        <Chevron />
      </button>
      <div className="mr-[13px] flex h-[34px] flex-1 items-center rounded-[5px] border border-[#b0b0b0] bg-white pl-[8px]">
        <svg viewBox="0 0 22 22" className="mr-[6px] size-[22px]" fill="none" stroke="#9b9b9b" strokeWidth="1.500" aria-hidden="true">
          <circle cx="8.500" cy="9" r="7.500" />
          <path d="M14 15L21 21.500" />
        </svg>
        <input type="text" aria-label="过滤仓库" placeholder="过滤仓库" className="h-full flex-1 bg-transparent outline-none placeholder:text-[#bcbcbc]" />
      </div>
      <button type="button" aria-label="设置" className="flex items-center gap-[2px]">
        <svg viewBox="0 0 20 20" className="size-[20px]" aria-hidden="true">
          <path fillRule="evenodd" d={`${gearPath(10, 10, 9.8, 6.8, 8)}M10 7.200a2.800 2.800 0 1 0 0.010 0Z`} fill="#222" />
        </svg>
        <Chevron />
      </button>
    </div>
  )
}

function RepoRow() {
  return (
    <div className="flex h-[82px] items-center border-t border-b-2 border-t-[#d2d2d2] border-b-[#c9c9c9] bg-[#dcdcdc] pt-[2px] pr-[17px] pl-10">
      <span className="mr-[13px] flex size-[67px] items-center justify-center rounded-full bg-[#6fabda]">
        <svg viewBox="0 0 36 22" className="h-[22px] w-[36px]" fill="none" stroke="#fff" strokeWidth="2.200" strokeLinecap="round" aria-hidden="true">
          <path d="M9 3L2 11L9 19M27 3L34 11L27 19M21 1L15 21" />
        </svg>
      </span>
      <span className="flex-1 text-[21px] text-[#222]">test</span>
      <button type="button" className="flex h-[34px] items-center gap-[8px] rounded-[4px] border border-b-2 border-[#a0a0a0] px-[6px] text-[17px] text-[#222]">
        <svg viewBox="0 0 14 18" className="h-[18px] w-[14px]" fill="none" stroke="#333" strokeWidth="1.400" aria-hidden="true">
          <circle cx="3" cy="3" r="1.700" />
          <circle cx="3" cy="15" r="1.700" />
          <circle cx="11.500" cy="6" r="1.700" />
          <path d="M3 4.700V13.300M11.500 7.700C11.500 12 5 11 3.500 13.500" />
        </svg>
        master
      </button>
    </div>
  )
}

/* ---------- preferences dialog ---------- */

const tabs: { label: string; width: string; art: ReactNode }[] = [
  {
    label: '通用',
    width: 'w-16',
    art: (
      <>
        <rect x="1" y="1" width="30" height="30" rx="1" />
        <rect x="11" y="6" width="10" height="20" rx="2" fill="#cfcfcf" />
        <path d="M11 15V8a2 2 0 0 1 2-2H19a2 2 0 0 1 2 2V15Z" fill="#6e6e6e" />
      </>
    ),
  },
  {
    label: '账户',
    width: 'w-16',
    art: (
      <>
        <circle cx="16" cy="16" r="15" />
        <circle cx="16" cy="10.500" r="4" />
        <path d="M16 17C12 17 10 21 9 25C13 28.500 19 28.500 23 25C22 21 20 17 16 17Z" />
      </>
    ),
  },
  {
    label: '提交',
    width: 'w-16',
    art: (
      <>
        <rect x="1" y="1" width="30" height="30" rx="1" />
        <path d="M5 6.500H21M5 11.500H26M5 16H24M5 20.500H21M5 25.500H26" />
      </>
    ),
  },
  {
    label: 'Diff',
    width: 'w-16',
    art: (
      <>
        <rect x="1" y="1" width="30" height="30" rx="1" />
        <path d="M1 16H31M5 8H13M5 23.500H13M9 19.500V27.500" />
      </>
    ),
  },
  {
    label: 'Git',
    width: 'w-16',
    art: (
      <>
        <path d="M16 1L31 16L16 31L1 16Z" />
        <path d="M11 4.500L22 15M16 9V23" />
        <circle cx="16" cy="9.500" r="1.800" />
        <circle cx="22.500" cy="16" r="1.800" />
        <circle cx="16" cy="23.500" r="1.800" />
      </>
    ),
  },
  {
    label: 'Mercurial',
    width: 'w-[90px]',
    art: (
      <>
        <path d="M17 2C25 1 31 8 31 16C31 24 25 31 20 31C15 30 20 25 20 21C20 15 9 17 9 9C9 5 13 2.500 17 2Z" />
        <circle cx="4" cy="15" r="2.600" />
        <circle cx="9.500" cy="25.500" r="4.200" />
      </>
    ),
  },
  {
    label: '自定义操作',
    width: 'w-[105px]',
    art: (
      <>
        <path d="M7.500 6V27M7.500 16H25M25 16V27" />
        <rect x="1" y="1" width="13" height="5" />
        <path d="M7.500 11L12 16L7.500 21L3 16Z" />
        <rect x="18" y="13.500" width="13" height="5" />
        <rect x="1" y="26" width="13" height="5" />
        <rect x="18" y="26" width="13" height="5" />
      </>
    ),
  },
  {
    label: '更新',
    width: 'w-16',
    art: (
      <>
        <circle cx="16" cy="16" r="15" />
        <path d="M13 7H19V17H24L16 25.500L8 17H13Z" />
      </>
    ),
  },
]

function TabIcon({ children }: { children: ReactNode }) {
  return (
    <svg viewBox="0 0 32 32" className="mt-[15px] mb-[14px] size-8" fill="#e6e6e6" stroke="#6e6e6e" strokeWidth="1.600" aria-hidden="true">
      {children}
    </svg>
  )
}

const options = [
  { id: 'backup', label: '进行破坏性操作时保留备份', checked: true },
  { id: 'console', label: '总是显示完整的控制台输出' },
  { id: 'force', label: '允许强制推送' },
  { id: 'debug', label: '显示调试菜单（部分选项可能需要重新启动程序）', spaced: true },
]

const pushButton =
  'h-8 rounded-[6px] border border-t-[#cfcfcf] border-x-[#c6c6c6] border-b-[#aeaeae] bg-white text-[21px] leading-[28px] shadow-[0_1px_1px_rgba(0,0,0,0.12)]'

function PreferencesDialog() {
  return (
    <section
      role="dialog"
      aria-labelledby="dialog-title"
      className="absolute top-[559px] left-[1069px] w-[1084px] overflow-hidden rounded-[9px] bg-[#ececec] text-[#222] shadow-[0_0_0_1px_rgba(0,0,0,0.2),0_30px_60px_rgba(0,0,0,0.45),0_0_20px_rgba(0,0,0,0.12)]"
    >
      <div className="border-b border-[#a3a3a3] bg-linear-to-b from-[#e7e7e7] to-[#cbcbcb] pr-[7px] pl-[6px]">
        <div className="grid h-9 grid-cols-3 items-center">
          <div className="flex gap-[13px] pl-[7px]">
            <span className="size-[19px] rounded-full border border-[#d9564a] bg-[#ec6a5e]" />
            <span className="size-[19px] rounded-full border border-[#bcbcbc] bg-[#d0d0d0]" />
            <span className="size-[19px] rounded-full border border-[#bcbcbc] bg-[#d0d0d0]" />
          </div>
          <h2 id="dialog-title" className="text-center text-[21px] leading-9 text-[#444]">高级</h2>
        </div>
        <div className="flex h-[89px] text-[18px] leading-5 text-[#484848]">
          {tabs.map((tab) => (
            <button type="button" key={tab.label} className={`flex flex-col items-center whitespace-nowrap ${tab.width}`}>
              <TabIcon>{tab.art}</TabIcon>
              {tab.label}
            </button>
          ))}
          <button type="button" className="ml-auto flex w-16 flex-col items-center rounded-t-[6px] bg-linear-to-b from-[#c6c6c6] to-[#b6b6b6] text-[#2a2a2a]">
            <TabIcon>
              <path d={gearPath(16, 16, 15.5, 11.5, 8, 0.28)} />
              <circle cx="16" cy="16" r="5.500" fill="#bebebe" />
            </TabIcon>
            高级
          </button>
        </div>
      </div>

      <div className="pt-[26px] pr-[33px] pb-8 pl-8 text-[21px]">
        {options.map((o) => (
          <div key={o.id} className={o.spaced ? 'mt-[13px] flex h-[35px] items-center' : 'flex h-[35px] items-center'}>
            <span className="relative mr-[7px] size-[22px]">
              <input
                id={o.id}
                type="checkbox"
                defaultChecked={o.checked}
                className="peer block size-[22px] appearance-none rounded-[5px] border border-[#bababa] bg-white checked:border-[#4480ee] checked:bg-[#4b88f7]"
              />
              <svg viewBox="0 0 22 22" className="pointer-events-none absolute inset-0 hidden peer-checked:block" aria-hidden="true">
                <path d="M5.500 11.500L9.500 16.500L16.500 5.500" fill="none" stroke="#fff" strokeWidth="2.600" strokeLinecap="round" strokeLinejoin="round" />
              </svg>
            </span>
            <label htmlFor={o.id} className="leading-[35px]">{o.label}</label>
          </div>
        ))}

        <div className="mt-[23px] flex h-[35px] items-start leading-[30px]">
          <span className="w-[125px]">GPG 程序：</span>
          <span className="w-[469px] text-[#b4b4b4]">没有选中项</span>
          <button type="button" className={`mt-[2px] w-[102px] ${pushButton}`}>浏览...</button>
        </div>

        <h3 className="mt-[26px] pl-[18px] text-[18px] leading-6">对 URL 的默认用户名其中不包括：</h3>
        <div className="rounded-[6px] border border-[#d6d6d6] bg-[#e2e2e2] px-[26px] pt-[27px] pb-[25px]">
          <div className="h-[299px] rounded-[4px] border-[6px] border-[#87a5e5] bg-white">
            <table className="w-full table-fixed border-collapse text-left text-[18px]">
              <colgroup>
                <col className="w-[583px]" />
                <col className="w-[354px]" />
                <col />
              </colgroup>
              <thead>
                <tr className="h-[38px] border-b-2 border-[#c3c3c3] bg-[#f0f0f0] leading-[27px]">
                  <th className="font-normal"><div className="border-r border-[#cfcfcf] pl-[7px]">主机名称</div></th>
                  <th className="font-normal"><div className="border-r border-[#cfcfcf] pl-[8px]">用户名</div></th>
                  <th aria-label="空" />
                </tr>
              </thead>
              <tbody>
                <tr className="h-6 bg-[#2b65d9] leading-6 text-white">
                  <td className="pl-[5px]">gitee.com</td>
                  <td className="pl-[7px]">13713662180</td>
                  <td />
                </tr>
              </tbody>
            </table>
          </div>
          <div className="mt-[14px] flex gap-4 pl-[6px]">
            <button type="button" className={`w-[132px] ${pushButton}`}>编辑</button>
            <button type="button" className={`w-[132px] ${pushButton}`}>移除</button>
          </div>
        </div>
      </div>
    </section>
  )
}

export default function App() {
  return (
    <div className="relative flex min-h-screen flex-col bg-[#2a3247] font-['Inter','Noto_Sans_CJK_SC',sans-serif]">
      <Gradients />
      <MenuBar />
      <main className="flex flex-1 flex-col bg-[#060b20] pt-[2px]">
        <TitleBar />
        <Toolbar />
        <div className="flex flex-1 flex-col bg-[#2a3247]">
          <div className="flex flex-1 flex-col rounded-b-[8px] bg-white">
            <RepoRow />
          </div>
        </div>
      </main>
      <PreferencesDialog />
      <Dock />
    </div>
  )
}
